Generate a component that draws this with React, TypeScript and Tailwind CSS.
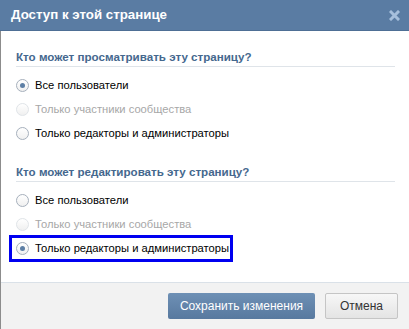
import { useState } from "react";

type Option = { label: string; disabled?: boolean };

const OPTIONS: Option[] = [
  { label: "Все пользователи" },
  { label: "Только участники сообщества", disabled: true },
  { label: "Только редакторы и администраторы" },
];

function Radio({ checked, disabled }: { checked: boolean; disabled?: boolean }) {
  return (
    <span
      className={
        "flex size-[13px] shrink-0 items-center justify-center rounded-full border bg-gradient-to-b from-white to-[#f0f0f0] " +
        (disabled ? "border-[#e0e4e8]" : "border-[#a6b0bc]")
      }
    >
      {checked && <span className="size-[5px] rounded-full bg-[#5d7fa5]" />}
    </span>
  );
}

function Section({
  title,
  value,
  onChange,
}: {
  title: string;
  value: number;
  onChange: (v: number) => void;
}) {
  return (
    <div>
      <div className="h-4 text-[11.6px] leading-4 font-bold text-[#45688e]">{title}</div>
      <div className="mt-[1px] mr-[14px] h-px bg-[#dfe4e9]" />
      <div className="mt-[6px]">
        {OPTIONS.map((o, i) => (
          <button
            key={i}
            type="button"
            disabled={o.disabled}
            onClick={() => onChange(i)}
            className={
              "flex h-6 items-center gap-[6px] text-[11.2px] " +
              (o.disabled ? "text-[#a7a7a7]" : "text-black")
            }
          >
            <Radio checked={value === i} disabled={o.disabled} />
            {o.label}
          </button>
        ))}
      </div>
    </div>
  );
}

export default function App() {
  const [view, setView] = useState(0);
  const [edit, setEdit] = useState(2);

  return (
    <div
      className="relative flex h-[329px] w-[409px] flex-col bg-white"
      style={{ fontFamily: '"Liberation Sans", Arial, sans-serif' }}
    >
      <div className="flex h-[31px] shrink-0 items-center justify-between border-b border-[#4e6f95] bg-[#5a7ca3] pr-2 pl-[11px]">
        <span className="text-[13.3px] font-bold text-white">Доступ к этой странице</span>
        <svg width="11" height="11" viewBox="0 0 11 11" className="mt-[1px] mr-[1px]">
          <path d="M2 2L9 9M9 2L2 9" stroke="#a6bfdc" strokeWidth="3" strokeLinecap="square" />
        </svg>
      </div>

      <div className="flex flex-1 flex-col border-l border-[#8c8c8c]">
        <div className="flex flex-1 flex-col gap-[19px] pt-[18px] pl-[15px]">
          <Section title="Кто может просматривать эту страницу?" value={view} onChange={setView} />
          <Section title="Кто может редактировать эту страницу?" value={edit} onChange={setEdit} />
        </div>

        <div className="flex h-[47px] shrink-0 justify-end gap-[10px] border-t border-[#dae1e8] bg-[#f2f2f2] pt-[10px] pr-[11px]">
          <button
            type="button"
            className="h-[26px] w-[147px] rounded-[2px] bg-gradient-to-b from-[#6e90b5] to-[#58799f] text-[12px] text-white"
          >
            Сохранить изменения
          </button>
          <button
            type="button"
            className="h-[26px] w-[73px] rounded-[2px] border border-[#c5c5c5] bg-gradient-to-b from-[#f7f7f7] to-[#e4e4e4] text-[12px] text-[#333]"
          >
            Отмена
          </button>
        </div>
      </div>

      <div className="pointer-events-none absolute top-[235px] left-[9px] h-[27px] w-[224px] border-[3px] border-[#0000f0]" />
    </div>
  );
}
